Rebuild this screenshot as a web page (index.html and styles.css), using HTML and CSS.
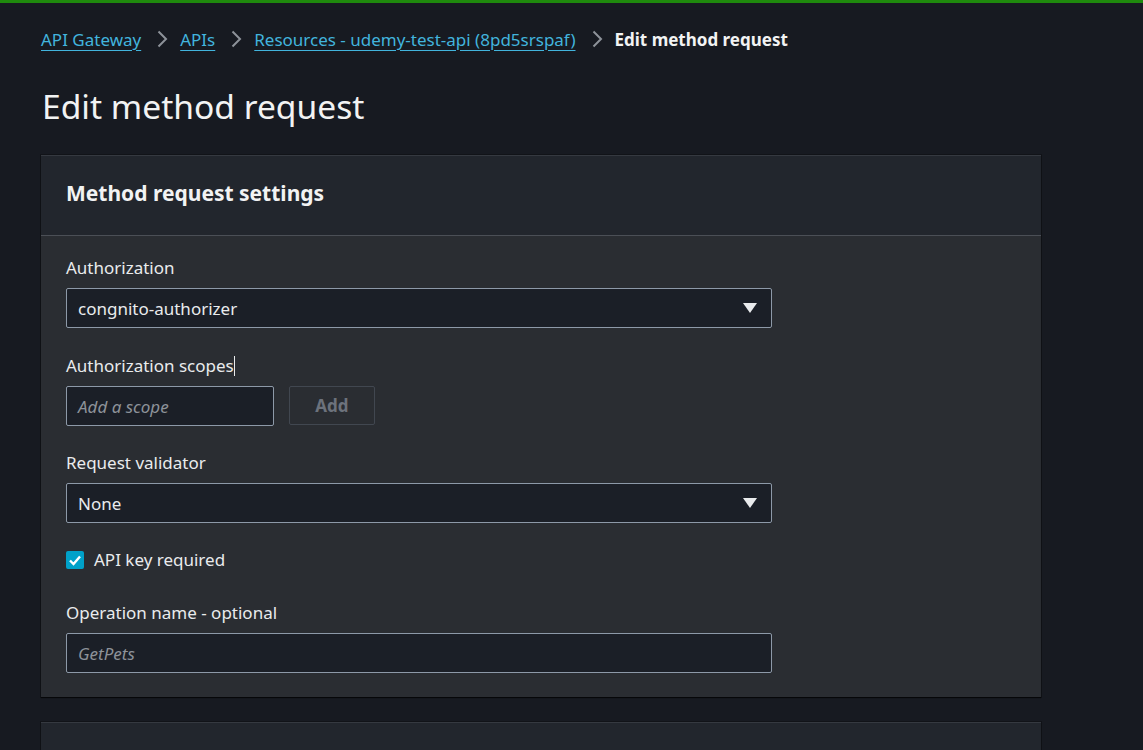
FILE: index.html
```html
<!DOCTYPE html>
<html lang="en">
<head>
<meta charset="utf-8">
<title>Edit method request</title>
<link rel="stylesheet" href="styles.css">
</head>
<body>
<div class="topbar"></div>
<main class="page">
  <nav class="crumbs">
    <a class="crumb-link" href="#">API Gateway</a>
    <svg class="chev" viewBox="0 0 12 18" width="12" height="18"><path d="M2.5 1.5l7.5 7.5-7.5 7.5" fill="none" stroke="#8d9299" stroke-width="2"/></svg>
    <a class="crumb-link" href="#">APIs</a>
    <svg class="chev" viewBox="0 0 12 18" width="12" height="18"><path d="M2.5 1.5l7.5 7.5-7.5 7.5" fill="none" stroke="#8d9299" stroke-width="2"/></svg>
    <a class="crumb-link" href="#">Resources - udemy-test-api (8pd5srspaf)</a>
    <svg class="chev" viewBox="0 0 12 18" width="12" height="18"><path d="M2.5 1.5l7.5 7.5-7.5 7.5" fill="none" stroke="#8d9299" stroke-width="2"/></svg>
    <span class="crumb-current">Edit method request</span>
  </nav>
  <h1 class="title">Edit method request</h1>

  <section class="card">
    <header class="card-head"><h2>Method request settings</h2></header>
    <div class="card-body">
      <div class="field">
        <label class="label">Authorization</label>
        <div class="select"><span>congnito-authorizer</span><svg class="caret" viewBox="0 0 14 10" width="14" height="10"><path d="M0 0h14L7 10z" fill="#e9ebed"/></svg></div>
      </div>
      <div class="field">
        <label class="label">Authorization scopes<span class="cursor"></span></label>
        <div class="scope-row">
          <div class="input scope"><span class="ph">Add a scope</span></div>
          <button class="btn-add">Add</button>
        </div>
      </div>
      <div class="field">
        <label class="label">Request validator</label>
        <div class="select"><span>None</span><svg class="caret" viewBox="0 0 14 10" width="14" height="10"><path d="M0 0h14L7 10z" fill="#e9ebed"/></svg></div>
      </div>
      <div class="check-row">
        <span class="checkbox"><svg viewBox="0 0 18 18" width="18" height="18"><path d="M4 9.5l3.5 3.5L14 5.5" fill="none" stroke="#fff" stroke-width="2.4"/></svg></span>
        <span class="check-label">API key required</span>
      </div>
      <div class="field last">
        <label class="label">Operation name - optional</label>
        <div class="input wide"><span class="ph">GetPets</span></div>
      </div>
    </div>
  </section>

  <section class="card next"></section>
</main>
</body>
</html>
```

FILE: styles.css
```css
html, body {
  margin: 0;
  padding: 0;
  background: #171a21;
  height: 100%;
  overflow: hidden;
}
body {
  font-family: "Noto Sans", "Open Sans", sans-serif;
  color: #e9ebed;
}
.topbar {
  height: 3px;
  background: #1f8a0d;
}
.page {
  padding: 0 0 0 41px;
  width: 1000px;
}
.crumbs {
  display: flex;
  align-items: center;
  height: 34px;
  margin-top: 19px;
  font-size: 17px;
}
.crumb-link {
  color: #42b4dd;
  text-decoration: underline;
  text-underline-offset: 4px;
  text-decoration-thickness: 1px;
}
.chev {
  margin: 0 12px 0 15px;
}
.crumb-current {
  font-weight: 700;
  color: #f2f3f3;
}
.title {
  margin: 28px 0 0 1px;
  font-size: 33.6px;
  font-weight: 400;
  line-height: 44px;
  color: #f2f3f3;
}
.card {
  margin-top: 27px;
  background: #2a2d32;
  box-shadow: 0 1px 1px rgba(0,0,0,.6), 0 0 0 1px rgba(0,0,0,.25);
  border-top: 1px solid #353940;
}
.card-head {
  background: #22262d;
  height: 80px;
  border-bottom: 1px solid #4b4f56;
  display: flex;
  align-items: center;
  padding: 0 25px 5px;
  box-sizing: border-box;
}
.card-head h2 {
  margin: 0;
  font-size: 21px;
  font-weight: 700;
  color: #f2f3f3;
  line-height: 1;
}
.card-body {
  padding: 20px 25px 24px;
}
.field {
  margin-bottom: 25px;
}
.field:first-child {
  margin-bottom: 26px;
}
.field.last {
  margin-bottom: 0;
}
.label {
  display: block;
  font-size: 17px;
  line-height: 24px;
  margin-bottom: 8px;
  color: #e9ebed;
}
.cursor {
  display: inline-block;
  width: 1px;
  height: 20px;
  background: #e9ebed;
  vertical-align: -4px;
}
.select, .input {
  box-sizing: border-box;
  height: 40px;
  border: 1px solid #8d99a8;
  border-radius: 2px;
  background: #1b1f27;
  display: flex;
  align-items: center;
  padding: 0 11px;
  font-size: 17px;
}
.select {
  width: 706px;
  justify-content: space-between;
  color: #e9ebed;
}
.caret {
  margin-right: 3px;
}
.scope-row {
  display: flex;
  gap: 15px;
}
.input.scope {
  width: 208px;
}
.input.wide {
  width: 706px;
}
.ph {
  font-style: italic;
  color: #8d9299;
}
.btn-add {
  box-sizing: border-box;
  width: 86px;
  height: 39px;
  background: transparent;
  border: 1px solid #414750;
  border-radius: 2px;
  color: #6c727c;
  font-family: inherit;
  font-size: 17px;
  font-weight: 700;
}
.check-row {
  display: flex;
  align-items: center;
  gap: 10px;
  margin: 25px 0 29px;
}
.checkbox {
  width: 18px;
  height: 18px;
  border-radius: 2px;
  background: #00a1c9;
  display: flex;
}
.check-label {
  font-size: 17px;
  line-height: 24px;
}
.card.next {
  margin-top: 25px;
  height: 60px;
  background: #22262d;
}
```
